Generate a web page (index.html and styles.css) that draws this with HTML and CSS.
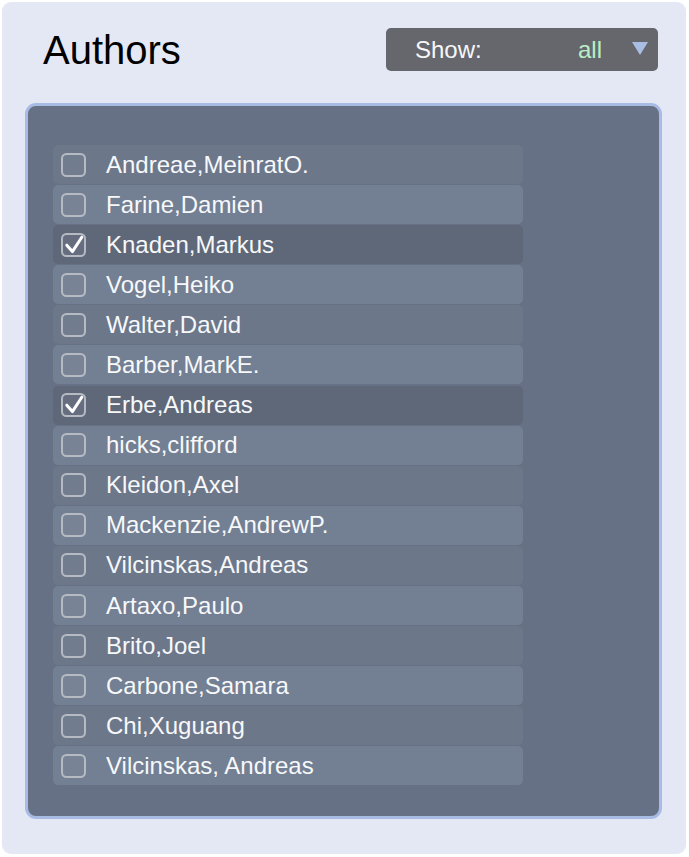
FILE: index.html
```html
<!DOCTYPE html>
<html lang="en">
<head>
<meta charset="utf-8">
<title>Authors</title>
<link rel="stylesheet" href="styles.css">
</head>
<body>
<div class="panel">
  <div class="header">
    <h1 class="title">Authors</h1>
    <div class="select">
      <span class="select-label">Show:</span>
      <span class="select-value">all</span>
      <svg class="select-arrow" width="16" height="13" viewBox="0 0 16 13"><path d="M0 0 H16 L8 13 Z" fill="#a9bde3"/></svg>
    </div>
  </div>
  <div class="list">
    <div class="row"><svg class="box" width="25" height="24" viewBox="0 0 25 24"><rect x="1" y="1" width="23" height="22" rx="4.5" /></svg><span class="name">Andreae,MeinratO.</span></div>
    <div class="row"><svg class="box" width="25" height="24" viewBox="0 0 25 24"><rect x="1" y="1" width="23" height="22" rx="4.5" /></svg><span class="name">Farine,Damien</span></div>
    <div class="row checked"><svg class="box" width="25" height="24" viewBox="0 0 25 24"><rect x="1" y="1" width="23" height="22" rx="4.5" /><path class="tick" d="M5.8 12.2 L11.4 18.6 L20.8 4.2" /></svg><span class="name">Knaden,Markus</span></div>
    <div class="row"><svg class="box" width="25" height="24" viewBox="0 0 25 24"><rect x="1" y="1" width="23" height="22" rx="4.5" /></svg><span class="name">Vogel,Heiko</span></div>
    <div class="row"><svg class="box" width="25" height="24" viewBox="0 0 25 24"><rect x="1" y="1" width="23" height="22" rx="4.5" /></svg><span class="name">Walter,David</span></div>
    <div class="row"><svg class="box" width="25" height="24" viewBox="0 0 25 24"><rect x="1" y="1" width="23" height="22" rx="4.5" /></svg><span class="name">Barber,MarkE.</span></div>
    <div class="row checked"><svg class="box" width="25" height="24" viewBox="0 0 25 24"><rect x="1" y="1" width="23" height="22" rx="4.5" /><path class="tick" d="M5.8 12.2 L11.4 18.6 L20.8 4.2" /></svg><span class="name">Erbe,Andreas</span></div>
    <div class="row"><svg class="box" width="25" height="24" viewBox="0 0 25 24"><rect x="1" y="1" width="23" height="22" rx="4.5" /></svg><span class="name">hicks,clifford</span></div>
    <div class="row"><svg class="box" width="25" height="24" viewBox="0 0 25 24"><rect x="1" y="1" width="23" height="22" rx="4.5" /></svg><span class="name">Kleidon,Axel</span></div>
    <div class="row"><svg class="box" width="25" height="24" viewBox="0 0 25 24"><rect x="1" y="1" width="23" height="22" rx="4.5" /></svg><span class="name">Mackenzie,AndrewP.</span></div>
    <div class="row"><svg class="box" width="25" height="24" viewBox="0 0 25 24"><rect x="1" y="1" width="23" height="22" rx="4.5" /></svg><span class="name">Vilcinskas,Andreas</span></div>
    <div class="row"><svg class="box" width="25" height="24" viewBox="0 0 25 24"><rect x="1" y="1" width="23" height="22" rx="4.5" /></svg><span class="name">Artaxo,Paulo</span></div>
    <div class="row"><svg class="box" width="25" height="24" viewBox="0 0 25 24"><rect x="1" y="1" width="23" height="22" rx="4.5" /></svg><span class="name">Brito,Joel</span></div>
    <div class="row"><svg class="box" width="25" height="24" viewBox="0 0 25 24"><rect x="1" y="1" width="23" height="22" rx="4.5" /></svg><span class="name">Carbone,Samara</span></div>
    <div class="row"><svg class="box" width="25" height="24" viewBox="0 0 25 24"><rect x="1" y="1" width="23" height="22" rx="4.5" /></svg><span class="name">Chi,Xuguang</span></div>
    <div class="row"><svg class="box" width="25" height="24" viewBox="0 0 25 24"><rect x="1" y="1" width="23" height="22" rx="4.5" /></svg><span class="name">Vilcinskas, Andreas</span></div>
  </div>
</div>
</body>
</html>
```

FILE: styles.css
```css
* { box-sizing: border-box; }

html, body {
  margin: 0;
  padding: 0;
  background: #ffffff;
  font-family: "Liberation Sans", Arial, sans-serif;
}

.panel {
  margin: 2px;
  width: 684px;
  height: 852px;
  padding: 0 24px 0 23px;
  background: #e4e8f5;
  border-radius: 9px;
}

.header {
  height: 101px;
  display: flex;
  align-items: center;
  justify-content: space-between;
  padding: 0 4px 6px 18px;
}

.title {
  margin: 0;
  font-size: 40px;
  font-weight: normal;
  color: #000000;
  line-height: 1;
}

.select {
  width: 272px;
  height: 43px;
  background: #66676d;
  border-radius: 5px;
  display: flex;
  align-items: center;
  padding: 0 10px 0 29px;
  font-size: 24px;
}

.select-label {
  color: #f6f6f8;
  flex: 1;
}

.select-value {
  color: #b9efc4;
  margin-right: 30px;
}

.select-arrow {
  display: block;
  margin-top: -2px;
}

.list {
  height: 716px;
  background: #667185;
  border: 3px solid #a8bbe4;
  border-radius: 11px;
  padding: 39px 0 0 25px;
  display: flex;
  flex-direction: column;
  gap: 1.1px;
}

.row {
  width: 470px;
  height: 39px;
  flex: none;
  display: flex;
  align-items: center;
  padding-left: 8px;
  background: #6c778a;
  border-radius: 5px;
}

.row:nth-child(even) {
  background: #737f92;
}

.row.checked {
  background: #5f6879;
}

.box {
  display: block;
  flex: none;
}

.box rect {
  fill: rgba(255, 255, 255, 0.04);
  stroke: #b6bac2;
  stroke-width: 2;
}

.box .tick {
  fill: none;
  stroke: #ffffff;
  stroke-width: 3;
  stroke-linecap: round;
  stroke-linejoin: round;
}

.name {
  margin-left: 20px;
  color: #f7f8fa;
  font-size: 24px;
  white-space: nowrap;
}
```
